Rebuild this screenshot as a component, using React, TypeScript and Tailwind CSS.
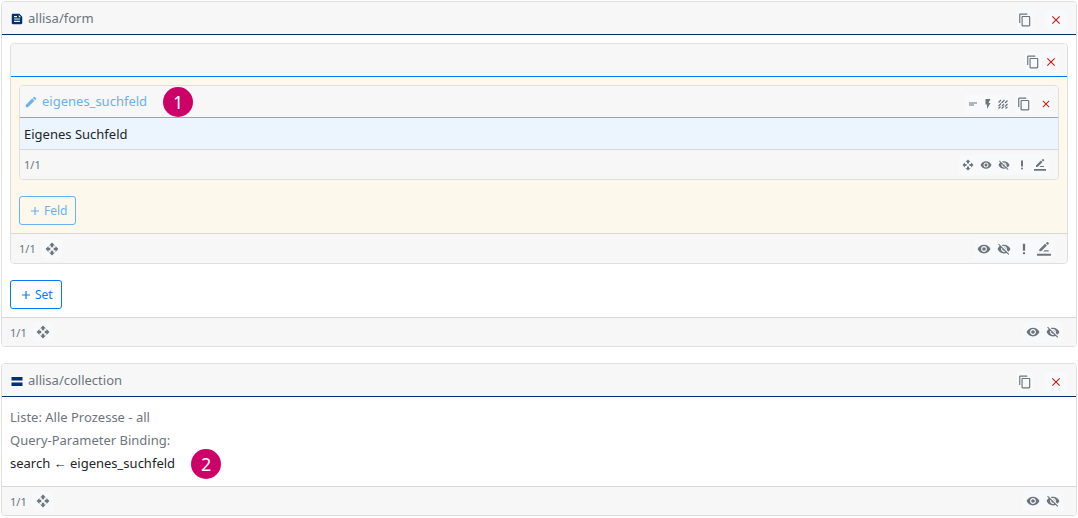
import type { ReactNode } from 'react'
import clsx from 'clsx'
import {
  MdAdd,
  MdClose,
  MdContentCopy,
  MdEdit,
  MdFeed,
  MdFlashOn,
  MdOpenWith,
  MdPriorityHigh,
  MdShortText,
  MdVisibility,
  MdVisibilityOff,
} from 'react-icons/md'

type Icon = () => ReactNode

function BarsIcon() {
  return (
    <svg viewBox="0 0 14 14" width="1em" height="1em" fill="currentColor">
      <path d="M1.5 3h11v3.6h-11zM1.5 8.4h11V12h-11z" />
    </svg>
  )
}

function PatternIcon() {
  return (
    <svg viewBox="0 0 24 24" width="1em" height="1em" stroke="currentColor" strokeWidth="2.4" fill="none">
      <path d="M3 9l5-5M9 10l6-6M16 10l5-5M3 16l5-5M10 16l4-4M16 17l5-5M3 21l4-4M9 21l5-4M17 21l4-3" />
    </svg>
  )
}

function PenLineIcon() {
  return (
    <svg viewBox="0 0 24 24" width="1em" height="1em" fill="currentColor">
      <path d="M17 6.2L13.800 3 4 12.800V16h3.200L17 6.200zM20.200 3c.4-.4.4-1 0-1.400L18.600.3c-.4-.4-1-.4-1.400 0L15.200 2l3 3 2-2z" />
      <path d="M13 14h7v2.200h-9.200zM0 20h24v3.600H0z" />
    </svg>
  )
}

type IconButtonProps = {
  icon: Icon
  label: string
  className?: string
}

function IconButton({ icon: Icon, label, className }: IconButtonProps) {
  return (
    <button
      type="button"
      aria-label={label}
      className={clsx('flex h-5 items-center justify-center bg-[#f8f9fa]', className)}
    >
      <Icon />
    </button>
  )
}

function Marker({ children }: { children: ReactNode }) {
  return (
    <span className="flex size-[30px] shrink-0 items-center justify-center rounded-full bg-[#cc0066] text-lg text-white">
      {children}
    </span>
  )
}

function Card({ children }: { children: ReactNode }) {
  return (
    <section className="overflow-hidden rounded border border-[#dfdfdf] bg-white">{children}</section>
  )
}

function CardHeader({ className, children }: { className: string; children: ReactNode }) {
  return (
    <header className={clsx('flex items-center border-b bg-[#f7f7f7]', className)}>{children}</header>
  )
}

function CardFooter({ className, children }: { className: string; children: ReactNode }) {
  return (
    <footer
      className={clsx(
        'flex items-center border-t border-[#d8d8d8] bg-[#f7f7f7] text-[11px] text-[#6c757d]',
        className,
      )}
    >
      {children}
    </footer>
  )
}

function ElementHeader({ icon: Icon, title }: { icon: Icon; title: string }) {
  return (
    <CardHeader className="h-[33px] border-[#003070] pl-2 pr-[9px]">
      <span className="pt-0.5 text-sm text-[#003070]">
        <Icon />
      </span>
      <h2 className="ml-1 text-[#6c757d]">{title}</h2>
      <div className="ml-auto flex gap-3 pt-1 text-sm">
        <IconButton icon={MdContentCopy} label="Kopieren" className="w-4 text-[#6c757d]" />
        <IconButton icon={MdClose} label="Löschen" className="w-[22px] text-[#c81e1e]" />
      </div>
    </CardHeader>
  )
}

function ElementFooter() {
  return (
    <CardFooter className="h-[29px] pl-2 pr-[13px]">
      <span>1/1</span>
      <IconButton icon={MdOpenWith} label="Verschieben" className="ml-1.5 w-5 text-sm" />
      <div className="ml-auto flex text-sm">
        <IconButton icon={MdVisibility} label="Sichtbar" className="w-5" />
        <IconButton icon={MdVisibilityOff} label="Versteckt" className="w-5" />
      </div>
    </CardFooter>
  )
}

function FieldCard() {
  return (
    <Card>
      <CardHeader className="h-8 border-[#6cb0ee] pl-1 pr-1.5">
        <MdEdit className="text-sm text-[#6cb0ee]" />
        <h4 className="ml-1 mr-4 text-[#6cb0ee]">eigenes_suchfeld</h4>
        <Marker>1</Marker>
        <div className="ml-auto flex items-center pt-1 text-xs text-[#6c757d]">
          <IconButton icon={MdShortText} label="Text" className="w-[15px]" />
          <IconButton icon={MdFlashOn} label="Aktion" className="w-[15px]" />
          <IconButton icon={PatternIcon} label="Muster" className="w-[15px]" />
          <IconButton icon={MdContentCopy} label="Kopieren" className="ml-1.5 w-4 text-sm" />
          <IconButton icon={MdClose} label="Löschen" className="ml-2 w-3 text-sm text-[#c81e1e]" />
        </div>
      </CardHeader>
      <p className="bg-[#ecf5fd] px-1 pb-[3px] pt-[5px] text-[#212529]">Eigenes Suchfeld</p>
      <CardFooter className="h-[30px] pl-1 pr-[9px]">
        <span>1/1</span>
        <div className="ml-auto flex text-xs">
          <IconButton icon={MdOpenWith} label="Verschieben" className="w-[18px]" />
          <IconButton icon={MdVisibility} label="Sichtbar" className="w-[18px]" />
          <IconButton icon={MdVisibilityOff} label="Versteckt" className="w-[18px]" />
          <IconButton icon={MdPriorityHigh} label="Pflichtfeld" className="w-[18px]" />
          <IconButton icon={PenLineIcon} label="Bearbeiten" className="w-[18px]" />
        </div>
      </CardFooter>
    </Card>
  )
}

function AddButton({ className, children }: { className: string; children: ReactNode }) {
  return (
    <button
      type="button"
      className={clsx(
        'mt-4 flex h-[29px] items-center gap-0.5 rounded-[3px] border px-2 text-xs',
        className,
      )}
    >
      <MdAdd className="text-sm" />
      {children}
    </button>
  )
}

function SetCard() {
  return (
    <Card>
      <CardHeader className="h-[33px] justify-end border-[#0a78f5] pr-2">
        <div className="flex gap-0.5 pt-1 text-sm">
          <IconButton icon={MdContentCopy} label="Kopieren" className="w-4 text-[#6c757d]" />
          <IconButton icon={MdClose} label="Löschen" className="w-4 text-[#c81e1e]" />
        </div>
      </CardHeader>
      <div className="bg-[#fcf8eb] p-2">
        <FieldCard />
        <AddButton className="border-[#6cb0ee] text-[#6cb0ee]">Feld</AddButton>
      </div>
      <CardFooter className="h-[30px] pl-2 pr-[13px]">
        <span>1/1</span>
        <IconButton icon={MdOpenWith} label="Verschieben" className="ml-1.5 w-5 text-sm" />
        <div className="ml-auto flex text-sm">
          <IconButton icon={MdVisibility} label="Sichtbar" className="w-5" />
          <IconButton icon={MdVisibilityOff} label="Versteckt" className="w-5" />
          <IconButton icon={MdPriorityHigh} label="Pflichtfeld" className="w-5" />
          <IconButton icon={PenLineIcon} label="Bearbeiten" className="w-5" />
        </div>
      </CardFooter>
    </Card>
  )
}

export default function App() {
  return (
    <main className="space-y-4 bg-white p-px font-['Noto_Sans',sans-serif] text-[13px] leading-[23px]">
      <Card>
        <ElementHeader icon={MdFeed} title="allisa/form" />
        <div className="p-2">
          <SetCard />
          <AddButton className="border-[#0a78f5] text-[#0a78f5]">Set</AddButton>
        </div>
        <ElementFooter />
      </Card>

      <Card>
        <ElementHeader icon={BarsIcon} title="allisa/collection" />
        <div className="px-2 pb-[11px] pt-[9px] text-[#6c757d]">
          <p>Liste: Alle Prozesse - all</p>
          <p>Query-Parameter Binding:</p>
          <div className="flex h-[23px] items-center gap-4 text-[#212529]">
            <p>search ← eigenes_suchfeld</p>
            <Marker>2</Marker>
          </div>
        </div>
        <ElementFooter />
      </Card>
    </main>
  )
}
